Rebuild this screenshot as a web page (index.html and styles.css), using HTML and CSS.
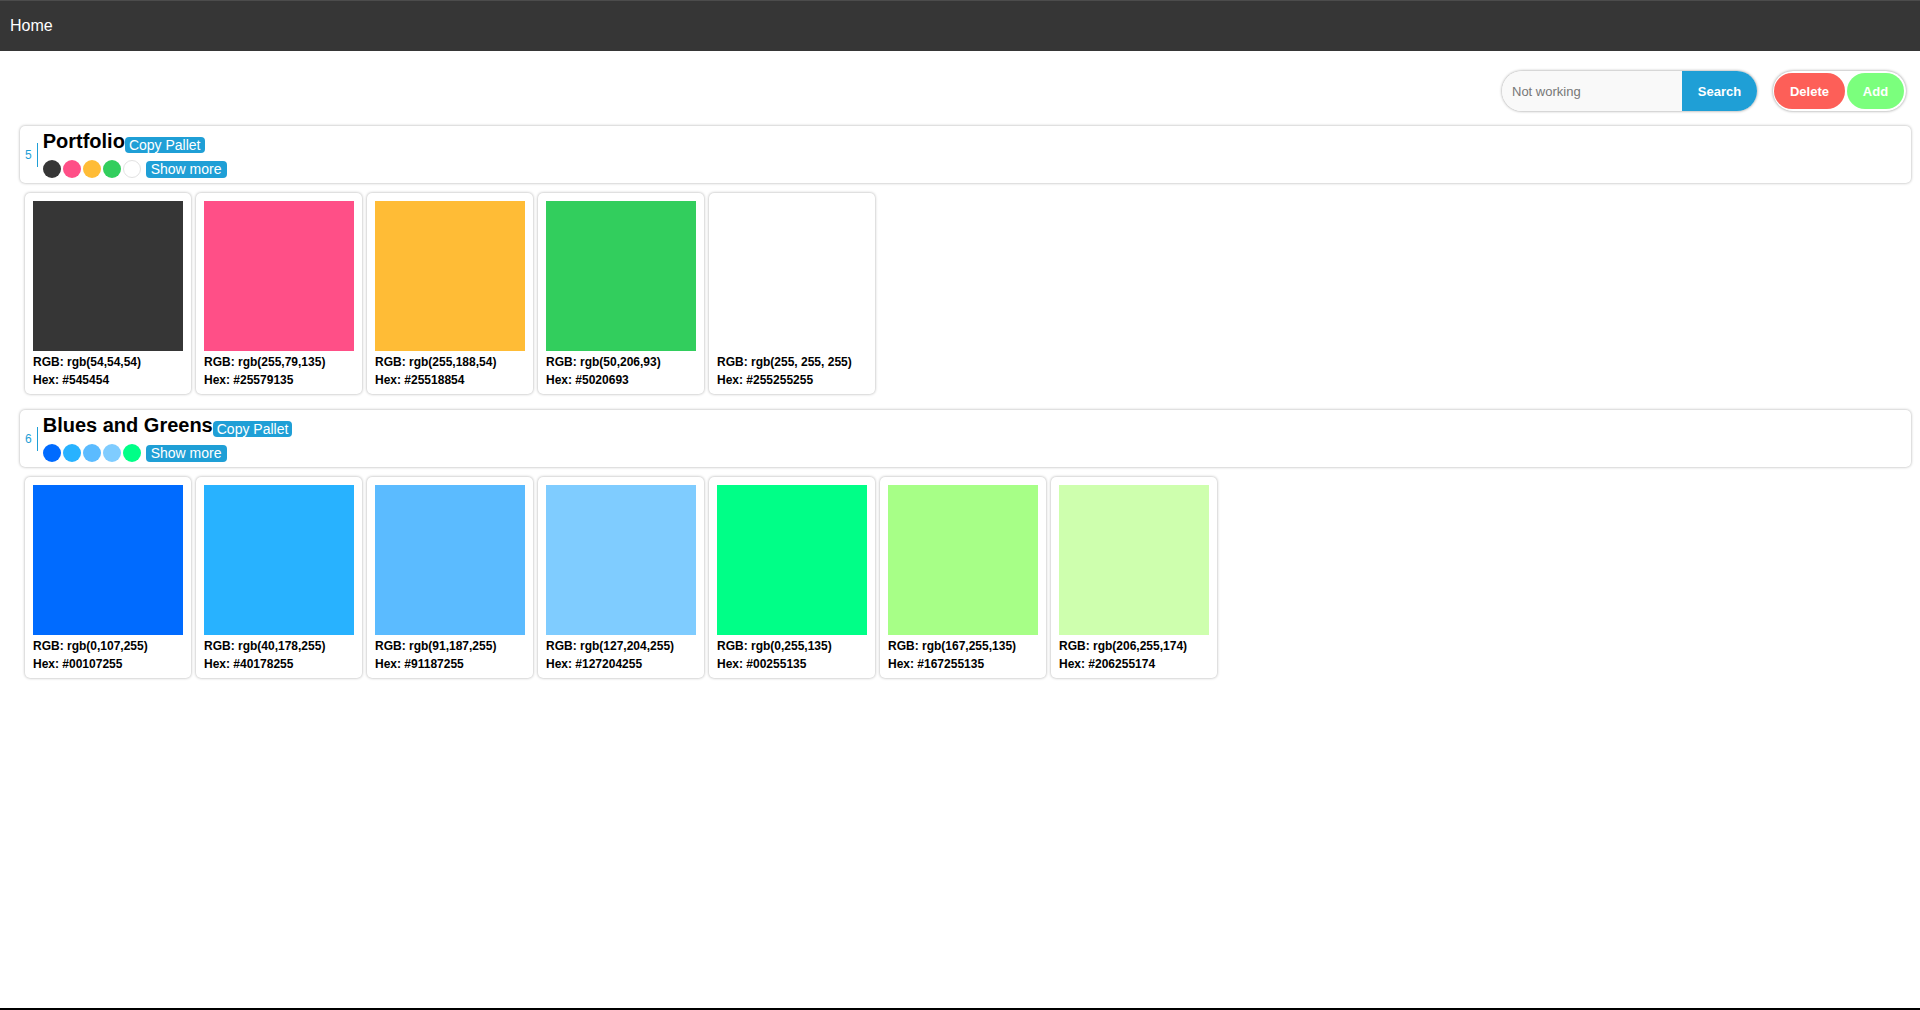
FILE: index.html
```html
<!DOCTYPE html>
<html>
<head>
<meta charset="utf-8">
<title>Palettes</title>
<link rel="stylesheet" href="styles.css">
</head>
<body>
<nav class="nav"><span class="nav-home">Home</span></nav>

<div class="toolbar">
  <div class="search">
    <input class="search-input" type="text" placeholder="Not working">
    <button class="search-btn">Search</button>
  </div>
  <div class="actions">
    <button class="btn btn-delete">Delete</button>
    <button class="btn btn-add">Add</button>
  </div>
</div>

<section class="palette">
  <div class="palette-head">
    <span class="palette-id">5</span>
    <div class="palette-info">
      <div class="title-row">
        <span class="palette-title">Portfolio</span><span class="badge">Copy Pallet</span>
      </div>
      <div class="dots-row">
        <span class="dot" style="background:#363636"></span>
        <span class="dot" style="background:#ff4f87"></span>
        <span class="dot" style="background:#ffbc36"></span>
        <span class="dot" style="background:#32ce5d"></span>
        <span class="dot dot-white" style="background:#ffffff"></span>
        <span class="badge badge-more">Show more</span>
      </div>
    </div>
  </div>
  <div class="cards">
    <div class="card"><div class="swatch" style="background:#363636"></div><div class="card-text">RGB: rgb(54,54,54)<br>Hex: #545454</div></div>
    <div class="card"><div class="swatch" style="background:#ff4f87"></div><div class="card-text">RGB: rgb(255,79,135)<br>Hex: #25579135</div></div>
    <div class="card"><div class="swatch" style="background:#ffbc36"></div><div class="card-text">RGB: rgb(255,188,54)<br>Hex: #25518854</div></div>
    <div class="card"><div class="swatch" style="background:#32ce5d"></div><div class="card-text">RGB: rgb(50,206,93)<br>Hex: #5020693</div></div>
    <div class="card"><div class="swatch" style="background:#ffffff"></div><div class="card-text">RGB: rgb(255, 255, 255)<br>Hex: #255255255</div></div>
  </div>
</section>

<section class="palette">
  <div class="palette-head">
    <span class="palette-id">6</span>
    <div class="palette-info">
      <div class="title-row">
        <span class="palette-title">Blues and Greens</span><span class="badge">Copy Pallet</span>
      </div>
      <div class="dots-row">
        <span class="dot" style="background:#006bff"></span>
        <span class="dot" style="background:#28b2ff"></span>
        <span class="dot" style="background:#5bbbff"></span>
        <span class="dot" style="background:#7fccff"></span>
        <span class="dot" style="background:#00ff87"></span>
        <span class="badge badge-more">Show more</span>
      </div>
    </div>
  </div>
  <div class="cards">
    <div class="card"><div class="swatch" style="background:#006bff"></div><div class="card-text">RGB: rgb(0,107,255)<br>Hex: #00107255</div></div>
    <div class="card"><div class="swatch" style="background:#28b2ff"></div><div class="card-text">RGB: rgb(40,178,255)<br>Hex: #40178255</div></div>
    <div class="card"><div class="swatch" style="background:#5bbbff"></div><div class="card-text">RGB: rgb(91,187,255)<br>Hex: #91187255</div></div>
    <div class="card"><div class="swatch" style="background:#7fccff"></div><div class="card-text">RGB: rgb(127,204,255)<br>Hex: #127204255</div></div>
    <div class="card"><div class="swatch" style="background:#00ff87"></div><div class="card-text">RGB: rgb(0,255,135)<br>Hex: #00255135</div></div>
    <div class="card"><div class="swatch" style="background:#a7ff87"></div><div class="card-text">RGB: rgb(167,255,135)<br>Hex: #167255135</div></div>
    <div class="card"><div class="swatch" style="background:#ceffae"></div><div class="card-text">RGB: rgb(206,255,174)<br>Hex: #206255174</div></div>
  </div>
</section>

<div class="bottom-line"></div>
</body>
</html>
```

FILE: styles.css
```css
* { box-sizing: border-box; }

html, body {
  margin: 0;
  padding: 0;
  background: #ffffff;
  font-family: "Liberation Sans", Arial, sans-serif;
  color: #000;
}

.nav {
  height: 51px;
  background: #363636;
  border-top: 1px solid #4c4c4c;
  padding-left: 10px;
  display: flex;
  align-items: center;
}

.nav-home {
  color: #ffffff;
  font-size: 16px;
  line-height: 50px;
}

.toolbar {
  display: flex;
  justify-content: flex-end;
  align-items: center;
  gap: 16px;
  margin-top: 20px;
  margin-bottom: 15px;
  padding-right: 14px;
}

.search {
  display: flex;
  height: 40px;
  border-radius: 20px;
  box-shadow: 0 0 3px rgba(0, 0, 0, 0.45);
  overflow: hidden;
}

.search-input {
  width: 180px;
  height: 40px;
  border: none;
  outline: none;
  background: #f9f9f9;
  padding: 0 0 0 10px;
  margin: 0;
  font-family: "Liberation Sans", Arial, sans-serif;
  font-size: 13px;
  color: #333;
}

.search-input::placeholder { color: #777; }

.search-btn {
  width: 75px;
  height: 40px;
  border: none;
  margin: 0;
  background: #1f9fd6;
  color: #fff;
  font-family: "Liberation Sans", Arial, sans-serif;
  font-size: 13px;
  font-weight: bold;
  padding: 0;
}

.actions {
  display: flex;
  align-items: center;
  gap: 2px;
  height: 40px;
  width: 133px;
  padding: 0 2px 0 1px;
  border-radius: 20px;
  box-shadow: 0 0 3px rgba(0, 0, 0, 0.45);
  background: #fff;
}

.btn {
  height: 36px;
  border: none;
  border-radius: 18px;
  color: #fff;
  font-family: "Liberation Sans", Arial, sans-serif;
  font-size: 13px;
  font-weight: bold;
  padding: 0;
}

.btn-delete { width: 71px; background: #fd5f58; }
.btn-add { width: 57px; background: #7bff7d; }

.palette {
  margin: 0 9px 16px 20px;
}

.palette-head {
  height: 57px;
  border-radius: 5px;
  box-shadow: 0 0 3px rgba(0, 0, 0, 0.35);
  display: flex;
  align-items: center;
  padding-left: 5px;
}

.palette-id {
  font-size: 12px;
  color: #1f9fd6;
  height: 24px;
  line-height: 24px;
  padding-right: 5px;
  border-right: 1px solid #1f9fd6;
  margin-top: 1px;
}

.palette-info {
  margin-left: 5px;
  display: flex;
  flex-direction: column;
  align-self: flex-start;
  padding-top: 3px;
}

.title-row {
  display: flex;
  align-items: flex-end;
  height: 24px;
}

.palette-title {
  font-size: 20px;
  font-weight: bold;
  line-height: 24px;
}

.badge {
  display: inline-block;
  background: #1f9fd6;
  color: #fff;
  font-size: 14px;
  height: 16px;
  line-height: 16px;
  padding: 0 4px;
  border-radius: 4px;
}

.dots-row {
  display: flex;
  align-items: center;
  gap: 2px;
  margin-top: 7px;
  height: 18px;
}

.dot {
  width: 18px;
  height: 18px;
  border-radius: 50%;
}

.dot-white { border: 1px solid #e2e2e2; }

.badge-more {
  margin-left: 3px;
  height: 17px;
  line-height: 17px;
  padding: 0 5px;
}

.cards {
  display: flex;
  gap: 5px;
  margin-top: 10px;
  padding-left: 5px;
}

.card {
  width: 166px;
  height: 201px;
  padding: 8px 8px 5px 8px;
  border-radius: 5px;
  box-shadow: 0 0 3px rgba(0, 0, 0, 0.35);
  background: #fff;
}

.swatch {
  width: 150px;
  height: 150px;
}

.card-text {
  padding-top: 2px;
  font-size: 12px;
  font-weight: bold;
  line-height: 18px;
  color: #000;
}

.bottom-line {
  position: fixed;
  left: 0;
  right: 0;
  bottom: 0;
  height: 2px;
  background: #000;
}
```
